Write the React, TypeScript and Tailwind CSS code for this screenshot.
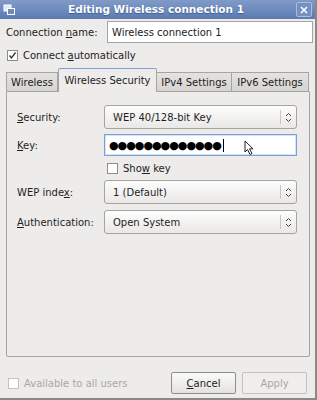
const font = { fontFamily: '"DejaVu Sans", "Liberation Sans", sans-serif' };

const U = ({ children }: { children: string }) => <span className="underline underline-offset-[1px]">{children}</span>;

const Check = ({ checked, disabled }: { checked?: boolean; disabled?: boolean }) => (
  <span
    className={`flex h-[11px] w-[11px] items-center justify-center border bg-white ${
      disabled ? "border-[#c4c2bf] bg-[#f0efee]" : "border-[#8f8d89]"
    }`}
  >
    {checked && (
      <svg width="9" height="9" viewBox="0 0 9 9">
        <path d="M1.5 4.5 L3.5 7 L7.5 1.5" fill="none" stroke="#333" strokeWidth="1.3" />
      </svg>
    )}
  </span>
);

const Combo = ({ value }: { value: string }) => (
  <div className="flex h-[24px] items-center rounded-[3px] border border-[#a6a4a0] bg-gradient-to-b from-[#fdfdfd] to-[#e9e8e6] pl-[8px]">
    <span className="flex-1 text-[#1e1e1e]">{value}</span>
    <span className="h-[14px] w-px bg-[#c9c7c3]" />
    <span className="flex w-[15px] justify-center">
      <svg width="7" height="11" viewBox="0 0 7 11">
        <path d="M1 4 L3.5 1.5 L6 4 M1 7 L3.5 9.5 L6 7" fill="none" stroke="#444" strokeWidth="1" />
      </svg>
    </span>
  </div>
);

const Row = ({ label, children, className = "" }: { label: React.ReactNode; children: React.ReactNode; className?: string }) => (
  <div className={`flex items-center ${className}`}>
    <span className="w-[87px] shrink-0 text-[#1e1e1e]">{label}</span>
    <div className="flex-1">{children}</div>
  </div>
);

export default function App() {
  return (
    <div style={font} className="flex h-[400px] w-[317px] flex-col border-r-2 border-b-2 border-[#8a8986] bg-[#edeceb] text-[10px] text-[#222]">
      {/* title bar */}
      <div className="flex h-[19px] items-center bg-gradient-to-b from-[#819bc8] to-[#5a7bb2] px-[3px]">
        <svg width="13" height="12" viewBox="0 0 13 12">
          <rect x="1" y="1" width="7" height="6" fill="#dfe7f4" stroke="#fff" strokeWidth="1" />
          <rect x="4.5" y="4.5" width="7" height="6" fill="#6c8bbd" stroke="#fff" strokeWidth="1" />
        </svg>
        <span className="flex-1 text-center text-[10.5px] font-bold text-white [text-shadow:0_1px_1px_#3d5a8a]">
          Editing Wireless connection 1
        </span>
        <span className="flex h-[15px] w-[16px] items-center justify-center rounded-[2px] border border-[#a9bde0] bg-[#7590c0]">
          <svg width="8" height="8" viewBox="0 0 8 8">
            <path d="M1 1 L7 7 M7 1 L1 7" stroke="#fff" strokeWidth="1.6" />
          </svg>
        </span>
      </div>

      {/* connection name */}
      <div className="mt-[2px] flex items-center pl-[6px] pr-[2px]">
        <span className="w-[101px] shrink-0">
          Connection <U>n</U>ame:
        </span>
        <div className="flex h-[22px] flex-1 items-center border border-[#a6a4a0] bg-white pl-[4px]">Wireless connection 1</div>
      </div>

      <div className="mt-[5px] flex h-[14px] items-center gap-[5px] pl-[7px]">
        <Check checked />
        <span>
          Connect <U>a</U>utomatically
        </span>
      </div>

      {/* tabs */}
      <div className="ml-[6px] mr-[6px] mt-[6px] flex h-[23px] items-end">
        <div className="flex h-[19px] w-[52px] items-center justify-center border border-b-0 border-[#a6a4a0] bg-gradient-to-b from-[#e4e3e1] to-[#d6d4d1]">Wireless</div>
        <div className="-mb-px relative z-10 flex h-[24px] w-[99px] items-center justify-center rounded-t-[2px] border border-b-0 border-[#a6a4a0] border-t-[#7ea1d6] bg-[#edeceb]">
          Wireless Security
        </div>
        <div className="flex h-[19px] w-[75px] items-center justify-center border border-b-0 border-l-0 border-[#a6a4a0] bg-gradient-to-b from-[#e4e3e1] to-[#d6d4d1]">IPv4 Settings</div>
        <div className="flex h-[19px] w-[77px] items-center justify-center border border-b-0 border-l-0 border-[#a6a4a0] bg-gradient-to-b from-[#e4e3e1] to-[#d6d4d1]">IPv6 Settings</div>
      </div>

      {/* panel */}
      <div className="ml-[6px] mr-[5px] flex h-[266px] flex-col rounded-b-[2px] border border-[#a6a4a0] pl-[10px] pr-[12px] pt-[13px]">
        <Row label={<><U>S</U>ecurity:</>}>
          <Combo value="WEP 40/128-bit Key" />
        </Row>
        <Row label={<><U>K</U>ey:</>} className="mt-[5px]">
          <div className="flex h-[22px] items-center border border-[#7b9fd3] bg-white pl-[4px] shadow-[inset_0_0_0_1px_#d7e3f4]">
            <span className="text-[11px] leading-none tracking-[-1px] text-black">●●●●●●●●●●●●●</span>
            <span className="ml-[2px] h-[13px] w-px bg-black" />
            <svg className="ml-[20px] mt-[6px]" width="12" height="16" viewBox="0 0 12 16">
              <path d="M1 1 L1 12 L3.5 9.5 L6 14.5 L8 13.5 L5.5 8.8 L9 8.8 Z" fill="#fff" stroke="#222" strokeWidth="1" />
            </svg>
          </div>
        </Row>
        <div className="mt-[5px] flex h-[14px] items-center gap-[5px] pl-[90px]">
          <Check />
          <span>
            Sho<U>w</U> key
          </span>
        </div>
        <Row label={<>WEP inde<U>x</U>:</>} className="mt-[5px]">
          <Combo value="1 (Default)" />
        </Row>
        <Row label={<><U>A</U>uthentication:</>} className="mt-[6px]">
          <Combo value="Open System" />
        </Row>
      </div>

      {/* bottom */}
      <div className="mt-[15px] flex items-center pl-[8px] pr-[8px]">
        <div className="flex flex-1 items-center gap-[5px] text-[#a9a7a4]">
          <Check disabled />
          <span>Available to all users</span>
        </div>
        <div className="flex h-[22px] w-[65px] items-center justify-center rounded-[2px] border border-[#8f8d89] bg-gradient-to-b from-[#fbfbfa] to-[#e3e2df]">
          <span><U>C</U>ancel</span>
        </div>
        <div className="ml-[6px] flex h-[22px] w-[65px] items-center justify-center rounded-[2px] border border-[#c4c2bf] bg-[#efeeed] text-[#a9a7a4]">
          Apply
        </div>
      </div>
    </div>
  );
}
